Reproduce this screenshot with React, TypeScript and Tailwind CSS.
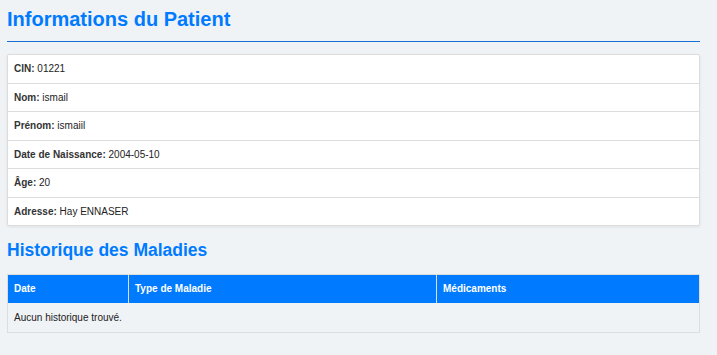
export default function App() {
  const rows: { label: string; value: string }[] = [
    { label: 'CIN', value: '01221' },
    { label: 'Nom', value: 'ismail' },
    { label: 'Prénom', value: 'ismaiil' },
    { label: 'Date de Naissance', value: '2004-05-10' },
    { label: 'Âge', value: '20' },
    { label: 'Adresse', value: 'Hay ENNASER' },
  ]

  return (
    <div className="min-h-screen bg-[#f0f3f6] px-[7px] pt-[8px] pr-[17px] font-['Liberation_Sans',Arial,sans-serif] text-[#222]">
      <h1 className="text-[20px] font-bold leading-[23px] text-[#007bff] pb-[10px] border-b border-[#1a6fd6]">
        Informations du Patient
      </h1>

      <div className="mt-[12px] bg-white border border-[#ddd] rounded-[2px] shadow-[0_1px_3px_rgba(0,0,0,0.08)]">
        {rows.map((r, i) => (
          <div
            key={r.label}
            className={`px-[6px] py-[8px] text-[10px] leading-[11.5px] ${i < rows.length - 1 ? 'border-b border-[#ddd]' : ''}`}
          >
            <strong className="font-bold text-[#333]">{r.label}:</strong> {r.value}
          </div>
        ))}
      </div>

      <h2 className="mt-[14px] text-[17.5px] font-bold leading-[20px] text-[#007bff]">Historique des Maladies</h2>

      <table className="mt-[14px] w-full border-collapse border border-[#ddd] text-[10px]">
        <thead>
          <tr className="bg-[#007bff] text-white">
            <th className="w-[121px] h-[28px] px-[6px] text-left font-bold border-r border-[#ddd]">Date</th>
            <th className="w-[308px] h-[28px] px-[6px] text-left font-bold border-r border-[#ddd]">Type de Maladie</th>
            <th className="h-[28px] px-[6px] text-left font-bold">Médicaments</th>
          </tr>
        </thead>
        <tbody>
          <tr>
            <td colSpan={3} className="h-[30px] px-[6px] text-left">
              Aucun historique trouvé.
            </td>
          </tr>
        </tbody>
      </table>
    </div>
  )
}
